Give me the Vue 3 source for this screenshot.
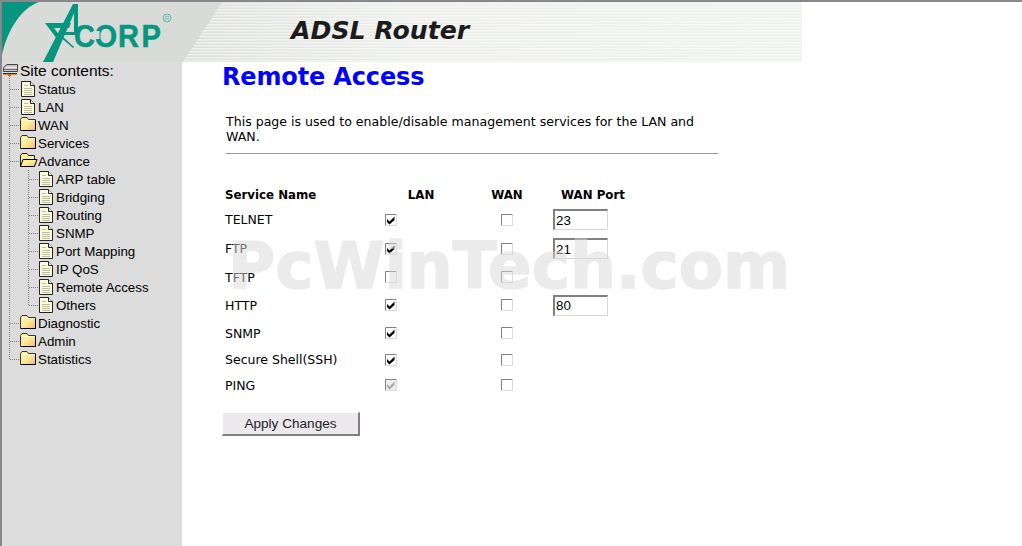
<script setup>
const tree = [
  { guides: ['t'], icon: 'doc', label: 'Status' },
  { guides: ['t'], icon: 'doc', label: 'LAN' },
  { guides: ['t'], icon: 'folder', label: 'WAN' },
  { guides: ['t'], icon: 'folder', label: 'Services' },
  { guides: ['t'], icon: 'open', label: 'Advance' },
  { guides: ['v', 't'], icon: 'doc', label: 'ARP table' },
  { guides: ['v', 't'], icon: 'doc', label: 'Bridging' },
  { guides: ['v', 't'], icon: 'doc', label: 'Routing' },
  { guides: ['v', 't'], icon: 'doc', label: 'SNMP' },
  { guides: ['v', 't'], icon: 'doc', label: 'Port Mapping' },
  { guides: ['v', 't'], icon: 'doc', label: 'IP QoS' },
  { guides: ['v', 't'], icon: 'doc', label: 'Remote Access' },
  { guides: ['v', 'l'], icon: 'doc', label: 'Others' },
  { guides: ['t'], icon: 'folder', label: 'Diagnostic' },
  { guides: ['t'], icon: 'folder', label: 'Admin' },
  { guides: ['l'], icon: 'folder', label: 'Statistics' }
]

const services = [
  { name: 'TELNET', lan: 'on', port: '23' },
  { name: 'FTP', lan: 'locked', port: '21' },
  { name: 'TFTP', lan: 'off', port: null },
  { name: 'HTTP', lan: 'on', port: '80' },
  { name: 'SNMP', lan: 'on', port: null },
  { name: 'Secure Shell(SSH)', lan: 'on', port: null },
  { name: 'PING', lan: 'faded', port: null }
]
</script>

<template>
  <div class="page">
    <header class="banner">
      <svg class="banner-art" width="800" height="60" viewBox="2 2 800 60">
        <defs>
          <linearGradient id="fade" x1="0" x2="1" y1="0" y2="0">
            <stop offset="0.2" stop-color="#dcdedb" />
            <stop offset="0.5" stop-color="#eceeea" />
            <stop offset="1" stop-color="#eff1ed" />
          </linearGradient>
          <pattern id="stripes" width="3" height="3" patternUnits="userSpaceOnUse">
            <rect width="3" height="1.5" fill="#ffffff" fill-opacity="0.5" />
          </pattern>
          <linearGradient id="folderFill" x1="0" x2="1" y1="0" y2="1">
            <stop offset="0.45" stop-color="#ffef9c" />
            <stop offset="1" stop-color="#f0b878" />
          </linearGradient>
        </defs>
        <rect x="2" y="2" width="800" height="60" fill="url(#fade)" />
        <rect x="2" y="2" width="800" height="60" fill="url(#stripes)" />
        <polygon points="2,2 222,2 183,62 2,62" fill="#d9dbd8" />
        <path d="M2 2H39C22 8 8 28 2 55Z" fill="#069680" />
        <g fill="#069680">
          <polygon points="43,62 53,62 78,4 73,4" />
          <polygon points="74,5 78,4 78,35 74,35" />
          <polygon points="45,23 71,23 69,28 54,28 60,36 57,39" />
          <polygon points="59,36 61,35 74,47 73,48" />
          <polygon points="64,32 76,32 76,35 63,35" />
        </g>
        <g transform="translate(0 46.5) scale(1 1.08)">
          <text class="logo-word" x="74 94.5 118 141.5" y="0">CORP</text>
        </g>
        <rect x="93" y="31" width="6.5" height="8" fill="#d9dbd8" />
        <circle cx="167" cy="18" r="4" fill="none" stroke="#62bdae" stroke-width="1" />
        <text class="logo-mark" x="167" y="20.5">R</text>
      </svg>
      <span class="banner-title">ADSL Router</span>
    </header>

    <div class="body">
      <nav class="sidebar">
        <div class="tree-root">
          <svg class="root-icon" width="18" height="18" viewBox="0 0 18 18">
            <path d="M5 2.5H15.5V9.5H1.5V5.5Z" fill="#c8c8c8" stroke="#444" />
            <line x1="3" y1="5.5" x2="15" y2="5.5" stroke="#f0f0f0" />
            <line x1="2" y1="7.5" x2="15" y2="7.5" stroke="#707070" />
            <line x1="1" y1="11.5" x2="15" y2="11.5" stroke="#333" />
            <line x1="1" y1="12.5" x2="15" y2="12.5" stroke="#d8902c" />
            <rect x="6" y="12" width="3" height="2" fill="#c87010" />
            <line x1="7.5" y1="14" x2="7.5" y2="18" class="dots" />
          </svg>
          <span>Site contents:</span>
        </div>
        <div v-for="item in tree" :key="item.label" class="tree-row">
          <svg v-for="(g, i) in item.guides" :key="i" class="guide" width="18" height="18" viewBox="0 0 18 18">
            <line v-if="g !== 'l'" :x1="i === 0 ? 7.5 : 8.5" y1="0" :x2="i === 0 ? 7.5 : 8.5" y2="18" class="dots" />
            <line v-else :x1="i === 0 ? 7.5 : 8.5" y1="0" :x2="i === 0 ? 7.5 : 8.5" y2="9" class="dots" />
            <line v-if="g !== 'v'" :x1="i === 0 ? 8 : 9" y1="9.5" x2="18" y2="9.5" class="dots" />
          </svg>
          <svg v-if="item.icon === 'doc'" class="icon" width="18" height="18" viewBox="0 0 18 18">
            <path d="M1.5 1.5H10.5L14.5 5.5V16.5H1.5Z" fill="#fcfadc" stroke="#222" />
            <path d="M10.5 1.5V5.5H14.5" fill="#fff" stroke="#222" />
            <path d="M4 5.5H8M4 8.5H12M4 10.5H12M4 12.5H12M4 14.5H12" stroke="#bdbda2" />
          </svg>
          <svg v-else-if="item.icon === 'folder'" class="icon" width="18" height="18" viewBox="0 0 18 18">
            <path d="M.5 3.5 2 1.5H7L8.5 3.5H15.5V14.5H.5Z" fill="url(#folderFill)" stroke="#333" />
            <path d="M1.5 4.5H14.5" stroke="#fffbd8" />
            <path d="M15.5 4V14.5H1" fill="none" stroke="#000" />
          </svg>
          <svg v-else class="icon" width="18" height="18" viewBox="0 0 18 18">
            <path d="M.5 3.5 2 1.5H7L8.5 3.5H14.5V14.5H.5Z" fill="#ffef9c" stroke="#222" />
            <path d="M.5 14.5 3 7.5H17L14.5 14.5Z" fill="url(#folderFill)" stroke="#000" />
          </svg>
          <span class="tree-label">{{ item.label }}</span>
        </div>
      </nav>

      <main class="content">
        <h1 class="heading">Remote Access</h1>
        <p class="intro">This page is used to enable/disable management services for the LAN and WAN.</p>
        <div class="rule"></div>

        <div class="grid">
          <div class="th">Service Name</div>
          <div class="th th-mid">LAN</div>
          <div class="th th-mid">WAN</div>
          <div class="th th-port">WAN Port</div>

          <template v-for="s in services" :key="s.name">
            <div class="cell name">{{ s.name }}</div>
            <div class="cell">
              <svg class="check" :class="'is-' + s.lan" width="12" height="12" viewBox="0 0 12 12">
                <rect class="box" width="12" height="12" />
                <path class="edge-dark" d="M.5 11.5V.5H11.5" />
                <path class="edge-light" d="M11.5 .5V11.5H.5" />
                <path v-if="s.lan !== 'off'" class="tick" d="M2 5 4.5 7.5 9.5 2.5V6L4.5 10.5 2 8Z" />
              </svg>
            </div>
            <div class="cell wan-cell">
              <svg class="check is-off" width="12" height="12" viewBox="0 0 12 12">
                <rect class="box" width="12" height="12" />
                <path class="edge-dark" d="M.5 11.5V.5H11.5" />
                <path class="edge-light" d="M11.5 .5V11.5H.5" />
              </svg>
            </div>
            <div class="cell">
              <input v-if="s.port" class="port" type="text" :value="s.port" />
            </div>
          </template>
        </div>

        <button class="apply" type="button">Apply Changes</button>
      </main>
    </div>

    <div class="watermark">PcWinTech.com</div>
  </div>
</template>

<style>
html, body { margin: 0; background: #fff; }
</style>

<style scoped>
.page {
  position: relative;
  width: 1022px;
  height: 546px;
  box-sizing: border-box;
  border-top: 2px solid #88888c;
  border-left: 2px solid #88888c;
  background: #fff;
  overflow: hidden;
  display: flex;
  flex-direction: column;
}
.banner {
  position: relative;
  flex: none;
  width: 800px;
  height: 60px;
}
.banner-art { display: block; }
.banner-title {
  position: absolute;
  left: 289px;
  top: 12px;
  font: italic bold 25.2px/34px "DejaVu Sans", sans-serif;
  color: #1c1c1c;
  white-space: nowrap;
}
.logo-word {
  font: bold 29px "Liberation Sans", sans-serif;
  fill: #069680;
  stroke: #069680;
  stroke-width: 0.5;
}
.logo-mark {
  font: 7px "Liberation Sans", sans-serif;
  fill: #62bdae;
  text-anchor: middle;
}
.body { flex: 1; display: flex; min-height: 0; }
.sidebar {
  flex: none;
  width: 180px;
  background: #dcdcdc;
  font: 13.33px/18px "Liberation Sans", sans-serif;
  color: #000;
}
.tree-root {
  display: flex;
  align-items: center;
  height: 18px;
  font-size: 15.5px;
}
.tree-row { display: flex; align-items: center; height: 18px; }
.guide, .icon, .root-icon { flex: none; display: block; }
.dots { stroke: #808080; stroke-dasharray: 1 1; }
.tree-label { white-space: nowrap; padding-top: 2px; }
.content { flex: 1; padding-left: 41px; min-width: 0; }
.heading {
  margin: 0 0 0 -1px;
  font: bold 24px/30px "DejaVu Sans", sans-serif;
  letter-spacing: -0.15px;
  color: #0000ff;
}
.intro {
  margin: 22px 0 0 3px;
  width: 492px;
  font: 12.57px/15px "DejaVu Sans", sans-serif;
  color: #000;
}
.rule {
  margin: 9px 0 0 3px;
  width: 492px;
  height: 1px;
  background: #9a9a9a;
}
.grid {
  margin: 29px 0 0 2px;
  display: grid;
  grid-template-columns: 160px 86px 82px 80px;
  grid-template-rows: 22px 29px 29px 28px 28px 28px 25px 26px;
  font: 12.5px/15px "DejaVu Sans", sans-serif;
  color: #000;
}
.th { font-size: 11.8px; font-weight: bold; display: flex; align-items: center; padding-top: 2px; box-sizing: border-box; }
.th-mid { width: 72px; justify-content: center; }
.th-port { justify-content: center; }
.cell { display: flex; align-items: center; }
.wan-cell { width: 72px; justify-content: center; }
.name { white-space: nowrap; }
.check { display: block; flex: none; }
.box { fill: #fff; }
.edge-dark { fill: none; stroke: #808080; }
.edge-light { fill: none; stroke: #dcdcdc; }
.tick { fill: #000; }
.is-locked .box { fill: #f4f4f4; }
.is-faded .box { fill: #eeeeee; }
.is-faded .tick { fill: #a8a8a8; }
.port {
  box-sizing: border-box;
  width: 55px;
  height: 21px;
  padding: 0 0 0 1px;
  border-style: solid;
  border-width: 2px 1px 1px 2px;
  border-color: #808080 #d8d8d8 #d8d8d8 #808080;
  background: #fff;
  font: 13.33px "Liberation Sans", sans-serif;
  color: #000;
  outline: none;
}
.apply {
  display: block;
  margin: 14px 0 0 -1px;
  box-sizing: border-box;
  width: 138px;
  height: 24px;
  padding: 0;
  border-style: solid;
  border-width: 1px 2px 2px 1px;
  border-color: #ffffff #808080 #808080 #ffffff;
  background: #ece9ee;
  font: 13.6px "Liberation Sans", sans-serif;
  color: #222;
}
.watermark {
  position: absolute;
  left: 226px;
  top: 229px;
  font: bold 64.5px/70px "DejaVu Sans", sans-serif;
  color: #d9d9d9;
  -webkit-text-stroke: 1.5px #d9d9d9;
  opacity: 0.5;
  white-space: nowrap;
  pointer-events: none;
}
</style>
